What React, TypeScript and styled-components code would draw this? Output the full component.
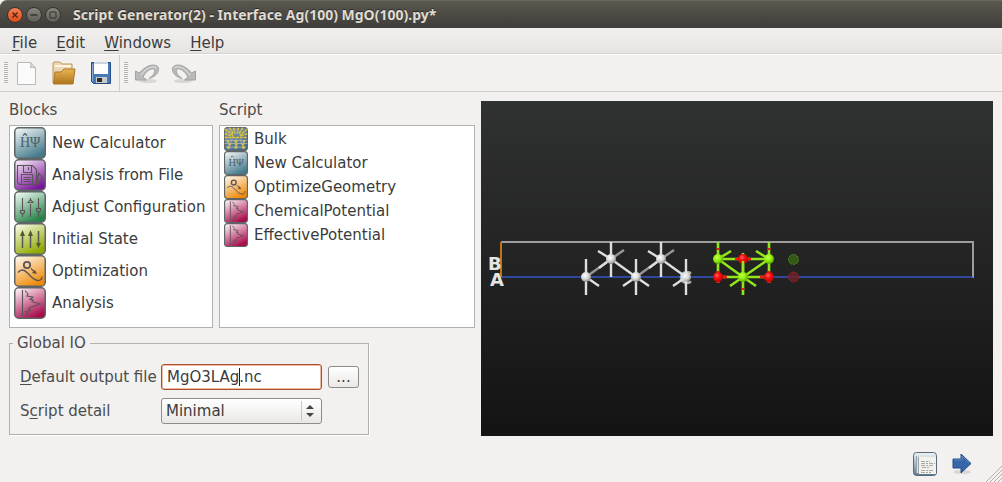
import React, { useId } from "react";
import styled, { createGlobalStyle } from "styled-components";

const GlobalStyle = createGlobalStyle`
  *, *::before, *::after { box-sizing: border-box; }
  body {
    margin: 0;
    background: #f2f1f0;
    color: #4c4c4c;
    font: 15px/18px "DejaVu Sans", sans-serif;
  }
  button, input, select { font: inherit; color: #3c3c3c; }
`;

const Window = styled.div`
  display: flex;
  flex-direction: column;
  min-height: 100vh;
`;

const TitleBar = styled.header`
  display: flex;
  align-items: center;
  gap: 3px;
  height: 28px;
  padding: 0 7px;
  border-top: 1px solid #6b6860;
  border-radius: 7px 0 0 0;
  background: linear-gradient(#5a574e, #3e3d39);
`;

const Title = styled.h1`
  margin: 0 0 0 9px;
  color: #dfdbd2;
  font: bold 14px/20px "Noto Sans", "Open Sans", sans-serif;
  text-shadow: 0 -1px 0 #2b2a27;
  white-space: nowrap;
`;

const WindowButton = styled.button<{ $close?: boolean }>`
  display: flex;
  width: 16px;
  height: 16px;
  padding: 0;
  border: 1px solid #35342f;
  border-radius: 50%;
  background: ${(p) => (p.$close ? "linear-gradient(#f58055, #df4b18)" : "linear-gradient(#87857c, #5f5d55)")};
`;

const MenuBar = styled.nav`
  display: flex;
  gap: 19px;
  height: 26px;
  padding: 5px 12px 0;
  border-bottom: 1px solid #d6d4d2;
  background: linear-gradient(#f1f0ef, #e5e4e3);
`;

const MenuButton = styled.button`
  padding: 0;
  border: 0;
  background: none;
  line-height: 18px;
`;

const Mnemonic = styled.span`
  text-decoration: underline;
  text-decoration-thickness: 1px;
  text-underline-offset: 2px;
`;

const ToolBar = styled.div`
  display: flex;
  height: 38px;
  border-top: 1px solid #ffffff;
  border-bottom: 1px solid #cfcdcb;
`;

const ToolGroup = styled.div`
  display: flex;
  align-items: center;
  gap: 13px;
  padding: 0 6px 0 4px;
  & + & { border-left: 1px solid #cfcdcb; }
`;

const Grip = styled.span`
  width: 4px;
  height: 22px;
  margin-right: -6px;
  background: repeating-linear-gradient(#b1afad 0 1px, #f8f8f7 1px 2px);
`;

const IconButton = styled.button`
  display: flex;
  padding: 0;
  border: 0;
  background: none;
`;

const Main = styled.main`
  display: grid;
  grid-template-columns: 466px minmax(0, 1fr);
  flex: 1;
  gap: 6px;
  padding: 9px 9px 0;
`;

const Editor = styled.div`
  display: flex;
  flex-direction: column;
`;

const Lists = styled.div`
  display: grid;
  grid-template-columns: 204px 1fr;
  flex: 1;
  gap: 6px;
`;

const Panel = styled.section`
  display: flex;
  flex-direction: column;
`;

const PanelTitle = styled.h2`
  margin: 0 0 6px;
  font-size: 15px;
  font-weight: normal;
  line-height: 18px;
`;

const List = styled.ul`
  flex: 1;
  margin: 0;
  padding: 1px 4px;
  border: 1px solid #b3b1af;
  background: #ffffff;
  color: #3c3c3c;
  list-style: none;
`;

const ListItem = styled.li<{ $size: number }>`
  display: flex;
  align-items: center;
  gap: 6px;
  height: ${(p) => p.$size}px;
  white-space: nowrap;
`;

const Fieldset = styled.fieldset`
  display: grid;
  grid-template-columns: 135px 161px 31px;
  align-items: center;
  gap: 8px 6px;
  width: 360px;
  min-width: 0;
  margin: 6px 0 1px;
  padding: 12px 10px 10px;
  border: 1px solid #b3b1af;
  box-shadow: 1px 1px 0 #ffffff;
`;

const Legend = styled.legend`
  margin-left: -7px;
  padding: 0 4px;
  line-height: 18px;
`;

const Label = styled.label`
  white-space: nowrap;
`;

const Field = styled.div`
  position: relative;
  display: flex;
`;

const TextInput = styled.input`
  width: 100%;
  height: 26px;
  padding: 0 5px;
  border: 1px solid #a8502f;
  border-radius: 3px;
  outline: none;
  background: #ffffff;
  box-shadow: inset 0 0 0 1px #f0b9a4;
`;

const Caret = styled.span`
  position: absolute;
  top: 4px;
  left: 78px;
  width: 1px;
  height: 18px;
  background: #202020;
`;

const Select = styled.select`
  width: 100%;
  height: 26px;
  padding: 0 4px;
  border: 1px solid #8e8c8a;
  border-radius: 3px;
  background: linear-gradient(#ffffff, #e9e8e6);
  appearance: none;
`;

const Arrows = styled.svg`
  position: absolute;
  top: 3px;
  right: 3px;
  pointer-events: none;
`;

const BrowseButton = styled.button`
  height: 22px;
  padding: 0;
  border: 1px solid #8e8c8a;
  border-radius: 3px;
  background: linear-gradient(#ffffff, #e9e8e6);
  line-height: 18px;
`;

const Viewport = styled.section`
  display: flex;
  min-height: 335px;
  background: linear-gradient(#303231, #131313);
`;

const Footer = styled.footer`
  display: flex;
  align-items: center;
  justify-content: flex-end;
  gap: 15px;
  height: 46px;
  padding: 10px 30px 0 0;
`;

const ResizeGrip = styled.svg`
  position: fixed;
  right: 0;
  bottom: 0;
`;

type Kind = "calculator" | "file" | "adjust" | "initial" | "optimize" | "analysis" | "bulk";

const tints: Record<Kind, [string, string]> = {
  calculator: ["#f4f7f7", "#447a8b"],
  file: ["#fbf2fc", "#79149a"],
  adjust: ["#f2fbf4", "#258448"],
  initial: ["#fafbe8", "#90a900"],
  optimize: ["#fff9f0", "#ee8a08"],
  analysis: ["#fff5f9", "#a90b4c"],
  bulk: ["#8aa0a5", "#466c93"],
};

function Glyph({ kind }: { kind: Kind }) {
  switch (kind) {
    case "calculator":
      return (
        <g fill="#4c5c64" stroke="none" fontFamily="Liberation Serif, serif" fontSize="14">
          <text x="6" y="20">H</text>
          <text x="16" y="20">Ψ</text>
          <path d="M9 8.500l2-2 2 2" fill="none" stroke="#4c5c64" />
        </g>
      );
    case "file":
      return (
        <>
          <path d="M3.500 6.500h15l4 4v15H5.500l-2-2zM9.500 6.500v7h8v-7M14.500 8v3M7.500 25V15.500h11V25M9.500 18.500h7M9.500 20.500h7M9.500 22.500h7" />
          <path d="M24.500 14v3h-1v4h1v3l4-5z" />
        </>
      );
    case "adjust":
      return (
        <>
          <path d="M8.500 7v12M8.500 23v3M16.500 7v2M16.500 13v13M24.500 7v10M24.500 21v5" />
          <path d="M6.500 19.500h4v2l-2 2-2-2zM14 11.500l2.500-3 2.500 3zM22.500 17.500h4v2l-2 2-2-2z" />
        </>
      );
    case "initial":
      return (
        <>
          <path d="M8.500 25V10M16.500 25V10M24.500 8v13" strokeWidth="1.500" />
          <path d="M6 13l2.500-6 2.500 6zM14 13l2.500-6 2.500 6zM22 20l2.500 5 2.500-5z" fill="#53582c" stroke="none" />
        </>
      );
    case "optimize":
      return (
        <>
          <circle cx="13" cy="10" r="3.200" strokeWidth="1.800" />
          <path d="M4 17.500c3-3.500 6-3.500 10 1s7 7 10 7 4-2 4-4M17 13.500l3 3" strokeWidth="1.300" />
          <path d="M23 19l-5-1 3-3z" fill="#655034" stroke="none" />
        </>
      );
    case "analysis":
      return <path d="M8.500 3v26M11 3.500l3 3.500-1 2 6 1-3 2.500 3 .5-1 1.500 8 2.500-10 3.500-1.500 1.500 2 1.500-5 1 2.500 2-3 2" />;
    case "bulk":
      return (
        <>
          <path d="M1 3l11 7M7 1l6 8M13 1l2 8M19 1l-1 8M25 1l-5 8M31 3l-10 8M1 9l11 3M31 9l-10 3M1 14h30" stroke="#e2c33c" strokeWidth="2" strokeDasharray="4 1" />
          <path d="M1 18h30M1 22h30M3 27h26M11 15l-5 14M16 15v14M21 15l5 14" stroke="#a9b9b9" />
          <path d="M4 19h3M14 19h4M25 19h3M6 23h3M15 23h3M24 23h3M4 27h4M14 27h4M24 27h4" stroke="#dfc143" strokeWidth="3" />
        </>
      );
  }
}

function BlockIcon({ kind, size }: { kind: Kind; size: number }) {
  const id = useId();
  return (
    <svg width={size} height={size} viewBox="0 0 32 32" aria-hidden="true">
      <defs>
        <linearGradient id={id} x1="0.100" y1="0" x2="0.600" y2="1">
          <stop stopColor={tints[kind][0]} />
          <stop offset="1" stopColor={tints[kind][1]} />
        </linearGradient>
      </defs>
      <rect x="0.750" y="0.750" width="30.500" height="30.500" rx="4" fill={`url(#${id})`} stroke="#5f6565" strokeWidth="1.500" />
      <g fill="none" stroke="#5c5358" strokeWidth="1.100"><Glyph kind={kind} /></g>
    </svg>
  );
}

function NewIcon() {
  return (
    <svg width="24" height="26" viewBox="0 0 24 26">
      <path d="M2.500 2.500h13l5 5v17h-18z" fill="#fafafa" stroke="#b9b9b7" />
      <path d="M15.500 2.500c1 3 0 5 0 5s3-1 5 1" fill="#dededd" stroke="#b0b0ae" />
      <path d="M4 4h9M4 23h15" stroke="#fff" />
    </svg>
  );
}

function OpenIcon() {
  return (
    <svg width="24" height="26" viewBox="0 0 24 26">
      <defs><linearGradient id="folder" x2="0" y2="1"><stop stopColor="#e9b653" /><stop offset="1" stopColor="#ad741b" /></linearGradient></defs>
      <path d="M1 23V3l1-1h6l2 2h10v8" fill="#ecd6b2" stroke="#bd965c" />
      <path d="M3 6h16" stroke="#fff5de" strokeWidth="2" />
      <path d="M1.500 24L3 12h6l3-3h11l-2 15z" fill="url(#folder)" stroke="#ac7627" />
    </svg>
  );
}

function SaveIcon() {
  return (
    <svg width="24" height="26" viewBox="0 0 24 26">
      <path d="M2.500 2.500h19v21h-17l-2-2z" fill="#4679b6" stroke="#254d83" />
      <path d="M5 3h14v11H5z" fill="#fff" />
      <path d="M5 2h14v2H5z" fill="#cbd5e2" />
      <path d="M7 17h11v6H7z" fill="#c8cac8" />
      <rect x="8" y="18" width="5" height="4" fill="#292c30" />
      <path d="M3.500 4v17" stroke="#87acd6" />
    </svg>
  );
}

function UndoIcon({ flip }: { flip?: boolean }) {
  return (
    <svg width="24" height="24" viewBox="0 0 24 24">
      <g transform={flip ? "matrix(-1 0 0 1 24 0)" : undefined}>
        <ellipse cx="13" cy="20" rx="9" ry="2" fill="#d8d7d5" />
        <path d="M0.500 10v9h11l-3.500-3c3-6 8-9 11-8 2 2 0 6-5 9.500 7-2 10-6 9.500-10.500-2-5-12-4-19 5z" fill="#bababa" stroke="#a2a2a1" strokeLinejoin="round" />
        <path d="M6 14c5-7 12-10 15.500-7" fill="none" stroke="#e7e7e6" />
      </g>
    </svg>
  );
}

function EditorIcon() {
  return (
    <svg width="24" height="24" viewBox="0 0 24 24">
      <defs><linearGradient id="doc" x2="0" y2="1"><stop stopColor="#eff5f7" /><stop offset="1" stopColor="#587991" /></linearGradient></defs>
      <rect x="0.500" y="0.500" width="23" height="23" rx="3" fill="url(#doc)" stroke="#596a77" />
      <path d="M3 4h20v17H3z" fill="#dce2e3" />
      <path d="M5 5h18v17H5z" fill="#f2f1ec" />
      <path d="M5.500 5v17M3.500 4v17" stroke="#98a4aa" />
      <path d="M8 9.500h9M8 11.500h14M8 13.500h12M9 15.500h8M8 18.500h13M8 20.500h10" stroke="#a5aaa6" strokeDasharray="4 1 2 1" />
      <path d="M23.500 4v17" stroke="#596a77" />
    </svg>
  );
}

function NextIcon() {
  return (
    <svg width="20" height="22" viewBox="0 0 20 22">
      <ellipse cx="10" cy="19" rx="9" ry="2" fill="#d9d8d6" />
      <path d="M1 6h8V1l10 9.500L9 20v-5H1z" fill="#3867a8" stroke="#254f89" />
      <path d="M2 7h8V3l7 7" fill="none" stroke="#5985bc" />
    </svg>
  );
}

const silverAtoms = [[105, 176], [130, 158], [155, 176], [180, 158], [205, 176]];

function Scene() {
  return (
    <svg width="100%" height="335" viewBox="0 0 512 335" role="img" aria-label="Interface configuration">
      <defs>
        <radialGradient id="silver" cx=".4" cy=".35" r=".65"><stop stopColor="#fff" /><stop offset=".55" stopColor="#d8d8d8" /><stop offset="1" stopColor="#8c8c8c" /></radialGradient>
        <radialGradient id="green" cx=".4" cy=".35" r=".65"><stop stopColor="#cbff53" /><stop offset=".5" stopColor="#91f20a" /><stop offset="1" stopColor="#5aab00" /></radialGradient>
        <radialGradient id="red" cx=".4" cy=".35" r=".65"><stop stopColor="#ff6868" /><stop offset=".4" stopColor="#fb1111" /><stop offset="1" stopColor="#ba0000" /></radialGradient>
      </defs>
      <g fill="none" strokeWidth="2">
        <path d="M20 141H492V177" stroke="#9d9d9d" />
        <path d="M20 176H492" stroke="#3654c9" strokeWidth="1.600" />
        <path d="M20 141V176" stroke="#c37419" />
      </g>
      <g fill="#e5e5e5" fontFamily="DejaVu Sans, sans-serif" fontSize="18" fontWeight="bold">
        <text x="7" y="169">B</text>
        <text x="9" y="185">A</text>
      </g>
      <g fill="none" strokeWidth="2.400">
        <path d="M130 158l-25 18M180 158l-25 18" stroke="#969696" />
        <path d="M105 158V194M155 158V194M205 158V194M130 141V176M180 141V176M130 158l25 18M180 158l25 18M117 150l13 8M167 150l13 8M105 176l13 9M155 176l13 9M155 176l-13 9M205 176l-13 9M130 158l-12 9M180 158l-12 9" stroke="#dedede" />
        <path d="M130 158l13-9M180 158l13-9" stroke="#969696" />
      </g>
      {silverAtoms.map(([x, y]) => <circle key={x} cx={x} cy={y} r="5" fill="url(#silver)" />)}
      <text x="198" y="183" fill="#e2e2e2" fillOpacity=".75" fontFamily="DejaVu Sans, sans-serif" fontSize="18" fontWeight="bold">C</text>
      <g fill="none" stroke="#93e51b" strokeWidth="2.600">
        <path d="M237 141V182M288 141V182M262 152V194M237 158H288M237 176H288M237 158l25 18 26-18M237 158l13-8M288 158l-13-8M262 176l-13 9M262 176l13 9" />
        <path d="M237 147v2M288 147v2M237 170v12M288 170v12M262 187v2M254 158h16M237 176h9M288 176h-9" stroke="#f21818" />
      </g>
      <g fill="url(#red)">
        <circle cx="262" cy="158" r="5" /><circle cx="237" cy="176" r="5" /><circle cx="288" cy="176" r="5" />
      </g>
      <path d="M262 160v12" stroke="#92e61b" strokeWidth="2.500" />
      <g fill="url(#green)">
        <circle cx="237" cy="158" r="5" /><circle cx="288" cy="158" r="5" /><circle cx="262" cy="176" r="5" />
      </g>
      <circle cx="312.500" cy="158.500" r="5" fill="#365817" stroke="#4f8a20" strokeDasharray="2 1" />
      <circle cx="312.500" cy="176" r="5" fill="#6c2229" fillOpacity=".85" stroke="#9b2525" strokeDasharray="2 1" />
    </svg>
  );
}

const menus = ["File", "Edit", "Windows", "Help"];

const blocks: { kind: Kind; label: string }[] = [
  { kind: "calculator", label: "New Calculator" },
  { kind: "file", label: "Analysis from File" },
  { kind: "adjust", label: "Adjust Configuration" },
  { kind: "initial", label: "Initial State" },
  { kind: "optimize", label: "Optimization" },
  { kind: "analysis", label: "Analysis" },
];

const script: { kind: Kind; label: string }[] = [
  { kind: "bulk", label: "Bulk" },
  { kind: "calculator", label: "New Calculator" },
  { kind: "optimize", label: "OptimizeGeometry" },
  { kind: "analysis", label: "ChemicalPotential" },
  { kind: "analysis", label: "EffectivePotential" },
];

function BlockPanel({ title, items, size }: { title: string; items: typeof blocks; size: number }) {
  return (
    <Panel>
      <PanelTitle>{title}</PanelTitle>
      <List>
        {items.map((item) => (
          <ListItem key={item.label} $size={size}><BlockIcon kind={item.kind} size={size} />{item.label}</ListItem>
        ))}
      </List>
    </Panel>
  );
}

export default function App() {
  return (
    <Window>
      <GlobalStyle />
      <TitleBar>
        <WindowButton $close aria-label="Close"><svg width="14" height="14"><path d="M4.500 4.500l5 5M9.500 4.500l-5 5" stroke="#5b2614" strokeWidth="1.500" /></svg></WindowButton>
        <WindowButton aria-label="Minimize"><svg width="14" height="14"><path d="M3.500 7h7" stroke="#35342f" strokeWidth="1.500" /></svg></WindowButton>
        <WindowButton aria-label="Maximize"><svg width="14" height="14"><path d="M4 4h6v6H4z" fill="none" stroke="#35342f" /></svg></WindowButton>
        <Title>Script Generator(2) - Interface Ag(100) MgO(100).py*</Title>
      </TitleBar>
      <MenuBar>
        {menus.map((name) => <MenuButton key={name}><Mnemonic>{name[0]}</Mnemonic>{name.slice(1)}</MenuButton>)}
      </MenuBar>
      <ToolBar>
        <ToolGroup>
          <Grip />
          <IconButton aria-label="New"><NewIcon /></IconButton>
          <IconButton aria-label="Open"><OpenIcon /></IconButton>
          <IconButton aria-label="Save"><SaveIcon /></IconButton>
        </ToolGroup>
        <ToolGroup>
          <Grip />
          <IconButton aria-label="Undo"><UndoIcon /></IconButton>
          <IconButton aria-label="Redo"><UndoIcon flip /></IconButton>
        </ToolGroup>
      </ToolBar>
      <Main>
        <Editor>
          <Lists>
            <BlockPanel title="Blocks" items={blocks} size={32} />
            <BlockPanel title="Script" items={script} size={24} />
          </Lists>
          <Fieldset>
            <Legend>Global IO</Legend>
            <Label htmlFor="output"><Mnemonic>D</Mnemonic>efault output file</Label>
            <Field><TextInput id="output" defaultValue="MgO3LAg.nc" /><Caret /></Field>
            <BrowseButton aria-label="Browse">...</BrowseButton>
            <Label htmlFor="detail">S<Mnemonic>c</Mnemonic>ript detail</Label>
            <Field>
              <Select id="detail" defaultValue="Minimal"><option>Minimal</option></Select>
              <Arrows width="18" height="20"><path d="M0.500 0v20" stroke="#cbc9c7" /><path d="M5 8l4-4 4 4zM5 12l4 4 4-4z" fill="#444" /></Arrows>
            </Field>
          </Fieldset>
        </Editor>
        <Viewport><Scene /></Viewport>
      </Main>
      <Footer>
        <IconButton aria-label="Send to editor"><EditorIcon /></IconButton>
        <IconButton aria-label="Next"><NextIcon /></IconButton>
      </Footer>
      <ResizeGrip width="16" height="16" aria-hidden="true"><path d="M0 16L16 0M4 16L16 4M8 16l8-8M12 16l4-4" stroke="#b5b3b1" /></ResizeGrip>
    </Window>
  );
}
